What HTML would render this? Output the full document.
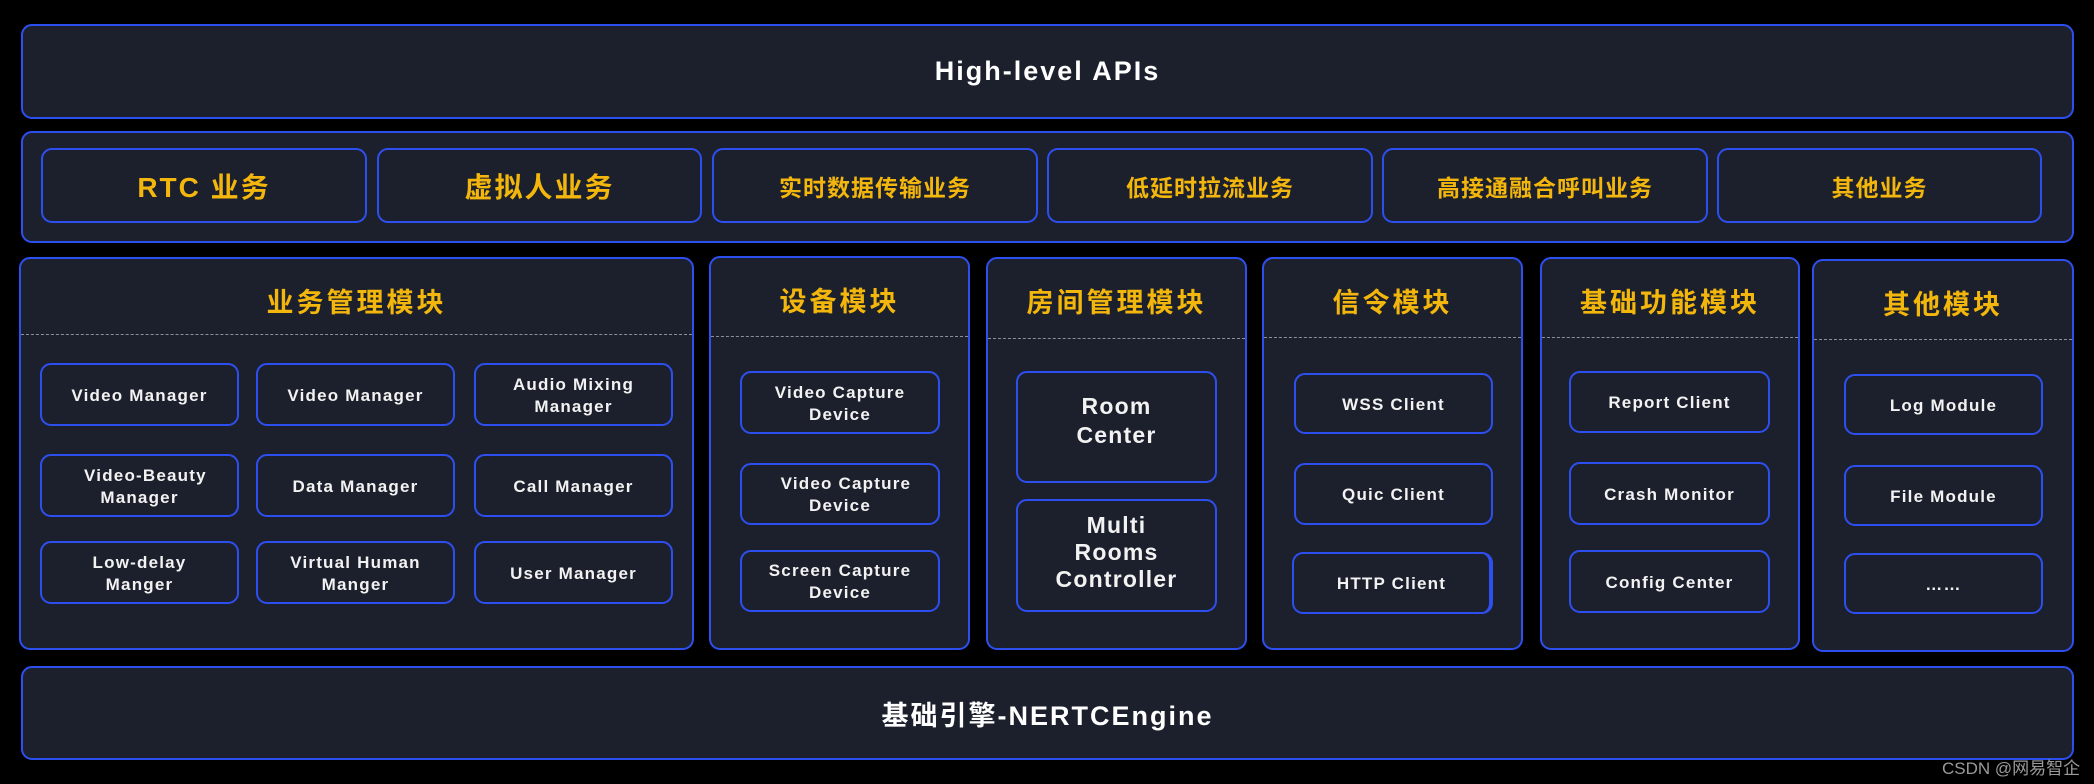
<!DOCTYPE html>
<html><head><meta charset="utf-8"><style>
*{margin:0;padding:0;box-sizing:border-box}
body{width:2094px;height:784px;background:#000;position:relative;overflow:hidden;font-family:"Liberation Sans","Noto Sans CJK SC",sans-serif}
.b{position:absolute;background:#1c202c;border:2.5px solid #2e4ff0;border-radius:11px;display:flex;align-items:center;justify-content:center;text-align:center}
.y{color:#f3b60c;font-weight:bold}
.w{color:#f2f2f2;font-weight:bold;font-size:17px;letter-spacing:1.2px;line-height:22px;padding-top:2px}
.t{position:absolute;left:0;right:0;text-align:center;color:#f3b60c;font-weight:bold;font-size:27px;letter-spacing:3px}
.d{position:absolute;left:0;right:0;border-top:1.5px dashed #8a8f9c}
.m{position:absolute;background:#1c202c;border:2.5px solid #2e4ff0;border-radius:11px}
</style></head><body>
<div class="b" style="left:21px;top:24px;width:2053px;height:95px;color:#fff;font-size:27px;font-weight:bold;letter-spacing:2px">High-level APIs</div>
<div class="m" style="left:21px;top:131px;width:2053px;height:112px"></div>
<div class="b y" style="left:41px;top:148px;width:326px;height:75px;font-size:28px;letter-spacing:2px">RTC 业务</div>
<div class="b y" style="left:377px;top:148px;width:325px;height:75px;font-size:28px;letter-spacing:2px">虚拟人业务</div>
<div class="b y" style="left:712px;top:148px;width:326px;height:75px;font-size:23px;letter-spacing:1px">实时数据传输业务</div>
<div class="b y" style="left:1047px;top:148px;width:326px;height:75px;font-size:23px;letter-spacing:1px">低延时拉流业务</div>
<div class="b y" style="left:1382px;top:148px;width:326px;height:75px;font-size:23px;letter-spacing:1px">高接通融合呼叫业务</div>
<div class="b y" style="left:1717px;top:148px;width:325px;height:75px;font-size:23px;letter-spacing:1px">其他业务</div>

<div class="m" style="left:19px;top:257px;width:675px;height:393px"><div class="t" style="top:22px">业务管理模块</div><div class="d" style="top:75px"></div></div>
<div class="m" style="left:709px;top:256px;width:261px;height:394px"><div class="t" style="top:22px">设备模块</div><div class="d" style="top:78px"></div></div>
<div class="m" style="left:986px;top:257px;width:261px;height:393px"><div class="t" style="top:22px">房间管理模块</div><div class="d" style="top:79px"></div></div>
<div class="m" style="left:1262px;top:257px;width:261px;height:393px"><div class="t" style="top:22px">信令模块</div><div class="d" style="top:78px"></div></div>
<div class="m" style="left:1540px;top:257px;width:260px;height:393px"><div class="t" style="top:22px">基础功能模块</div><div class="d" style="top:78px"></div></div>
<div class="m" style="left:1812px;top:259px;width:262px;height:393px"><div class="t" style="top:22px">其他模块</div><div class="d" style="top:78px"></div></div>

<div class="b w" style="left:40px;top:363px;width:199px;height:63px">Video Manager</div>
<div class="b w" style="left:256px;top:363px;width:199px;height:63px">Video Manager</div>
<div class="b w" style="left:474px;top:363px;width:199px;height:63px">Audio Mixing<br>Manager</div>
<div class="b w" style="left:40px;top:454px;width:199px;height:63px">&nbsp;&nbsp;Video-Beauty<br>Manager</div>
<div class="b w" style="left:256px;top:454px;width:199px;height:63px">Data Manager</div>
<div class="b w" style="left:474px;top:454px;width:199px;height:63px">Call Manager</div>
<div class="b w" style="left:40px;top:541px;width:199px;height:63px">Low-delay<br>Manger</div>
<div class="b w" style="left:256px;top:541px;width:199px;height:63px">Virtual Human<br>Manger</div>
<div class="b w" style="left:474px;top:541px;width:199px;height:63px">User Manager</div>

<div class="b w" style="left:740px;top:371px;width:200px;height:63px">Video Capture<br>Device</div>
<div class="b w" style="left:740px;top:463px;width:200px;height:62px">&nbsp;&nbsp;Video Capture<br>Device</div>
<div class="b w" style="left:740px;top:550px;width:200px;height:62px">Screen Capture<br>Device</div>

<div class="b w" style="left:1016px;top:371px;width:201px;height:112px;font-size:23px;line-height:29px;padding-bottom:14px">Room<br>Center</div>
<div class="b w" style="left:1016px;top:499px;width:201px;height:113px;font-size:23px;line-height:27px;padding-bottom:8px">Multi<br>Rooms<br>Controller</div>

<div class="b w" style="left:1294px;top:373px;width:199px;height:61px">WSS Client</div>
<div class="b w" style="left:1294px;top:463px;width:199px;height:62px">Quic Client</div>
<div class="b w" style="left:1292px;top:552px;width:201px;height:62px;border-right-width:4px">HTTP Client</div>

<div class="b w" style="left:1569px;top:371px;width:201px;height:62px">Report Client</div>
<div class="b w" style="left:1569px;top:462px;width:201px;height:63px">Crash Monitor</div>
<div class="b w" style="left:1569px;top:550px;width:201px;height:63px">Config Center</div>

<div class="b w" style="left:1844px;top:374px;width:199px;height:61px">Log Module</div>
<div class="b w" style="left:1844px;top:465px;width:199px;height:61px">File Module</div>
<div class="b w" style="left:1844px;top:553px;width:199px;height:61px">……</div>

<div class="b" style="left:21px;top:666px;width:2053px;height:94px;color:#fff;font-size:27px;font-weight:bold;letter-spacing:2px">基础引擎-NERTCEngine</div>
<div style="position:absolute;left:1942px;top:754px;color:#9a9a9a;font-size:17px;white-space:nowrap">CSDN @网易智企</div>
</body></html>
